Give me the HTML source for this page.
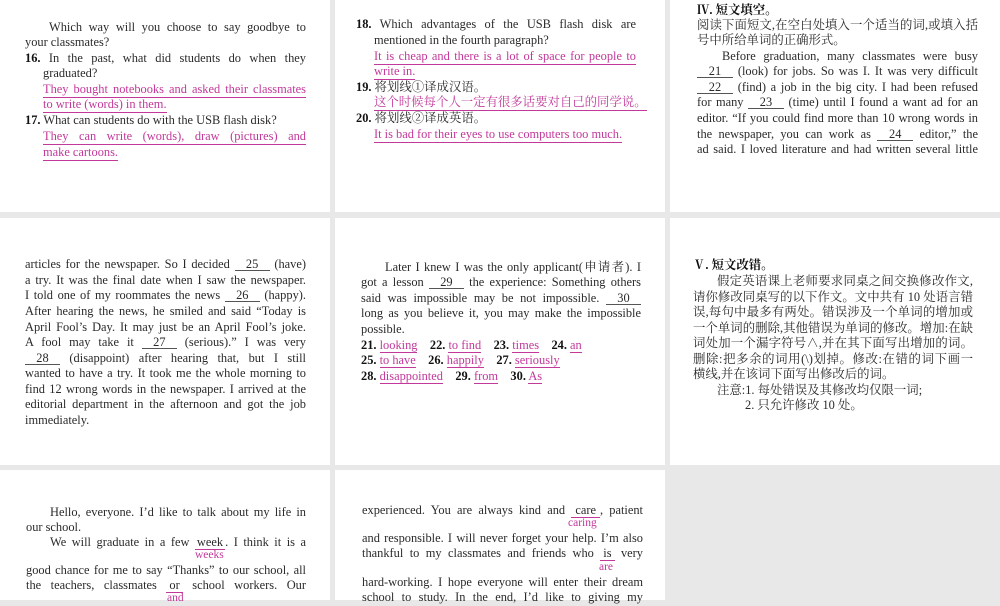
<!DOCTYPE html>
<html><head><meta charset="utf-8"><style>
html,body{margin:0;padding:0}
body{width:1000px;height:600px;background:#e8e8e8;position:relative;overflow:hidden;font-family:"Liberation Serif","Noto Serif CJK SC",serif;color:#2a2a2a}
.p{position:absolute;background:#fff}
.l{position:absolute;height:15px;line-height:15px;font-size:12.4px;white-space:nowrap}
.j{text-align:justify;text-align-last:justify}
.pk{color:#c2389b}
.u{border-bottom:1px solid #c2389b}
b{font-weight:bold;color:#111}
.bl{display:inline-block;border-bottom:1px solid #555;text-align:center;line-height:12px;text-align-last:center}
</style></head><body>
<div class="p" style="left:0;top:0;width:330px;height:212px"></div>
<div class="p" style="left:335px;top:0;width:330px;height:212px"></div>
<div class="p" style="left:670px;top:0;width:330px;height:212px"></div>
<div class="p" style="left:0;top:218px;width:330px;height:247px"></div>
<div class="p" style="left:335px;top:218px;width:330px;height:247px"></div>
<div class="p" style="left:670px;top:218px;width:330px;height:247px"></div>
<div class="p" style="left:0;top:470px;width:330px;height:130px"></div>
<div class="p" style="left:335px;top:470px;width:330px;height:130px"></div>

<!-- col1 row1 -->
<div class="l j" style="left:49px;top:20px;width:257px">Which way will you choose to say goodbye to</div>
<div class="l" style="left:25px;top:35px">your classmates?</div>
<div class="l j" style="left:25px;top:51px;width:281px"><b>16.</b> In the past, what did students do when they</div>
<div class="l" style="left:43px;top:66px">graduated?</div>
<div class="l j pk u" style="left:43px;top:82px;width:263px">They bought notebooks and asked their classmates</div>
<div class="l pk u" style="left:43px;top:97px">to write (words) in them.</div>
<div class="l" style="left:25px;top:113px"><b>17.</b> What can students do with the USB flash disk?</div>
<div class="l j pk u" style="left:43px;top:129px;width:263px">They can write (words), draw (pictures) and</div>
<div class="l pk u" style="left:43px;top:145px">make cartoons.</div>

<!-- col2 row1 -->
<div class="l j" style="left:356px;top:17px;width:280px"><b>18.</b> Which advantages of the USB flash disk are</div>
<div class="l" style="left:374px;top:33px">mentioned in the fourth paragraph?</div>
<div class="l j pk u" style="left:374px;top:49px;width:262px">It is cheap and there is a lot of space for people to</div>
<div class="l pk u" style="left:374px;top:64px">write in.</div>
<div class="l" style="left:356px;top:80px"><b>19.</b> 将划线①译成汉语。</div>
<div class="l pk u" style="left:374px;top:95px">这个时候每个人一定有很多话要对自己的同学说。</div>
<div class="l" style="left:356px;top:111px"><b>20.</b> 将划线②译成英语。</div>
<div class="l pk u" style="left:374px;top:127px">It is bad for their eyes to use computers too much.</div>

<!-- col3 row1 -->
<div class="l" style="left:697px;top:3px"><b>Ⅳ. 短文填空。</b></div>
<div class="l j" style="left:697px;top:18px;width:281px">阅读下面短文,在空白处填入一个适当的词,或填入括</div>
<div class="l" style="left:697px;top:33px">号中所给单词的正确形式。</div>
<div class="l j" style="left:722px;top:49px;width:256px">Before graduation, many classmates were busy</div>
<div class="l j" style="left:697px;top:64px;width:281px"><span class="bl" style="width:36px">21</span> (look) for jobs. So was I. It was very difficult</div>
<div class="l j" style="left:697px;top:80px;width:281px"><span class="bl" style="width:36px">22</span> (find) a job in the big city. I had been refused</div>
<div class="l j" style="left:697px;top:95px;width:281px">for many <span class="bl" style="width:36px">23</span> (time) until I found a want ad for an</div>
<div class="l j" style="left:697px;top:111px;width:281px">editor. “If you could find more than 10 wrong words in</div>
<div class="l j" style="left:697px;top:127px;width:281px">the newspaper, you can work as <span class="bl" style="width:36px">24</span> editor,” the</div>
<div class="l j" style="left:697px;top:142px;width:281px">ad said. I loved literature and had written several little</div>

<!-- col1 row2 -->
<div class="l j" style="left:25px;top:257px;width:281px">articles for the newspaper. So I decided <span class="bl" style="width:35px">25</span> (have)</div>
<div class="l j" style="left:25px;top:273px;width:281px">a try. It was the final date when I saw the newspaper.</div>
<div class="l j" style="left:25px;top:288px;width:281px">I told one of my roommates the news <span class="bl" style="width:35px">26</span> (happy).</div>
<div class="l j" style="left:25px;top:304px;width:281px">After hearing the news, he smiled and said “Today is</div>
<div class="l j" style="left:25px;top:320px;width:281px">April Fool’s Day. It may just be an April Fool’s joke.</div>
<div class="l j" style="left:25px;top:335px;width:281px">A fool may take it <span class="bl" style="width:35px">27</span> (serious).” I was very</div>
<div class="l j" style="left:25px;top:351px;width:281px"><span class="bl" style="width:35px">28</span> (disappoint) after hearing that, but I still</div>
<div class="l j" style="left:25px;top:366px;width:281px">wanted to have a try. It took me the whole morning to</div>
<div class="l j" style="left:25px;top:382px;width:281px">find 12 wrong words in the newspaper. I arrived at the</div>
<div class="l j" style="left:25px;top:397px;width:281px">editorial department in the afternoon and got the job</div>
<div class="l" style="left:25px;top:413px">immediately.</div>

<!-- col2 row2 -->
<div class="l j" style="left:385px;top:260px;width:256px">Later I knew I was the only applicant(申请者). I</div>
<div class="l j" style="left:361px;top:275px;width:280px">got a lesson <span class="bl" style="width:35px">29</span> the experience: Something others</div>
<div class="l j" style="left:361px;top:291px;width:280px">said was impossible may be not impossible. <span class="bl" style="width:35px">30</span></div>
<div class="l j" style="left:361px;top:306px;width:280px">long as you believe it, you may make the impossible</div>
<div class="l" style="left:361px;top:322px">possible.</div>
<div class="l" style="left:361px;top:338px"><b>21.</b> <span class="pk u">looking</span>&nbsp;&nbsp;&nbsp; <b>22.</b> <span class="pk u">to find</span>&nbsp;&nbsp;&nbsp; <b>23.</b> <span class="pk u">times</span>&nbsp;&nbsp;&nbsp; <b>24.</b> <span class="pk u">an</span></div>
<div class="l" style="left:361px;top:353px"><b>25.</b> <span class="pk u">to have</span>&nbsp;&nbsp;&nbsp; <b>26.</b> <span class="pk u">happily</span>&nbsp;&nbsp;&nbsp; <b>27.</b> <span class="pk u">seriously</span></div>
<div class="l" style="left:361px;top:369px"><b>28.</b> <span class="pk u">disappointed</span>&nbsp;&nbsp;&nbsp; <b>29.</b> <span class="pk u">from</span>&nbsp;&nbsp;&nbsp; <b>30.</b> <span class="pk u">As</span></div>

<!-- col3 row2 -->
<div class="l" style="left:693px;top:258px"><b>Ⅴ. 短文改错。</b></div>
<div class="l j" style="left:717px;top:274px;width:256px">假定英语课上老师要求同桌之间交换修改作文,</div>
<div class="l j" style="left:693px;top:290px;width:280px">请你修改同桌写的以下作文。文中共有 10 处语言错</div>
<div class="l j" style="left:693px;top:305px;width:280px">误,每句中最多有两处。错误涉及一个单词的增加或</div>
<div class="l j" style="left:693px;top:321px;width:280px">一个单词的删除,其他错误为单词的修改。增加:在缺</div>
<div class="l j" style="left:693px;top:336px;width:280px">词处加一个漏字符号∧,并在其下面写出增加的词。</div>
<div class="l j" style="left:693px;top:352px;width:280px">删除:把多余的词用(\)划掉。修改:在错的词下画一</div>
<div class="l" style="left:693px;top:367px">横线,并在该词下面写出修改后的词。</div>
<div class="l" style="left:717px;top:383px">注意:1. 每处错误及其修改均仅限一词;</div>
<div class="l" style="left:745px;top:398px">2. 只允许修改 10 处。</div>

<!-- col1 row3 -->
<div class="l j" style="left:50px;top:505px;width:256px">Hello, everyone. I’d like to talk about my life in</div>
<div class="l" style="left:26px;top:520px">our school.</div>
<div class="l j" style="left:50px;top:535px;width:256px">We will graduate in a few <span class="u" style="padding:0 2px">week</span>. I think it is a</div>
<div class="l pk" style="left:195px;top:548px;font-size:11.5px">weeks</div>
<div class="l j" style="left:26px;top:563px;width:280px">good chance for me to say “Thanks” to our school, all</div>
<div class="l j" style="left:26px;top:578px;width:280px">the teachers, classmates <span class="u" style="padding:0 3px">or</span> school workers. Our</div>
<div class="l pk" style="left:167px;top:591px;font-size:11.5px">and</div>

<!-- col2 row3 -->
<div class="l j" style="left:362px;top:503px;width:281px">experienced. You are always kind and <span class="u" style="padding:0 4px">care</span>, patient</div>
<div class="l pk" style="left:568px;top:516px;font-size:11.5px">caring</div>
<div class="l j" style="left:362px;top:531px;width:281px">and responsible. I will never forget your help. I’m also</div>
<div class="l j" style="left:362px;top:546px;width:281px">thankful to my classmates and friends who <span class="u" style="padding:0 3px">is</span> very</div>
<div class="l pk" style="left:599px;top:560px;font-size:11.5px">are</div>
<div class="l j" style="left:362px;top:575px;width:281px">hard-working. I hope everyone will enter their dream</div>
<div class="l j" style="left:362px;top:590px;width:281px">school to study. In the end, I’d like to giving my</div>
</body></html>
